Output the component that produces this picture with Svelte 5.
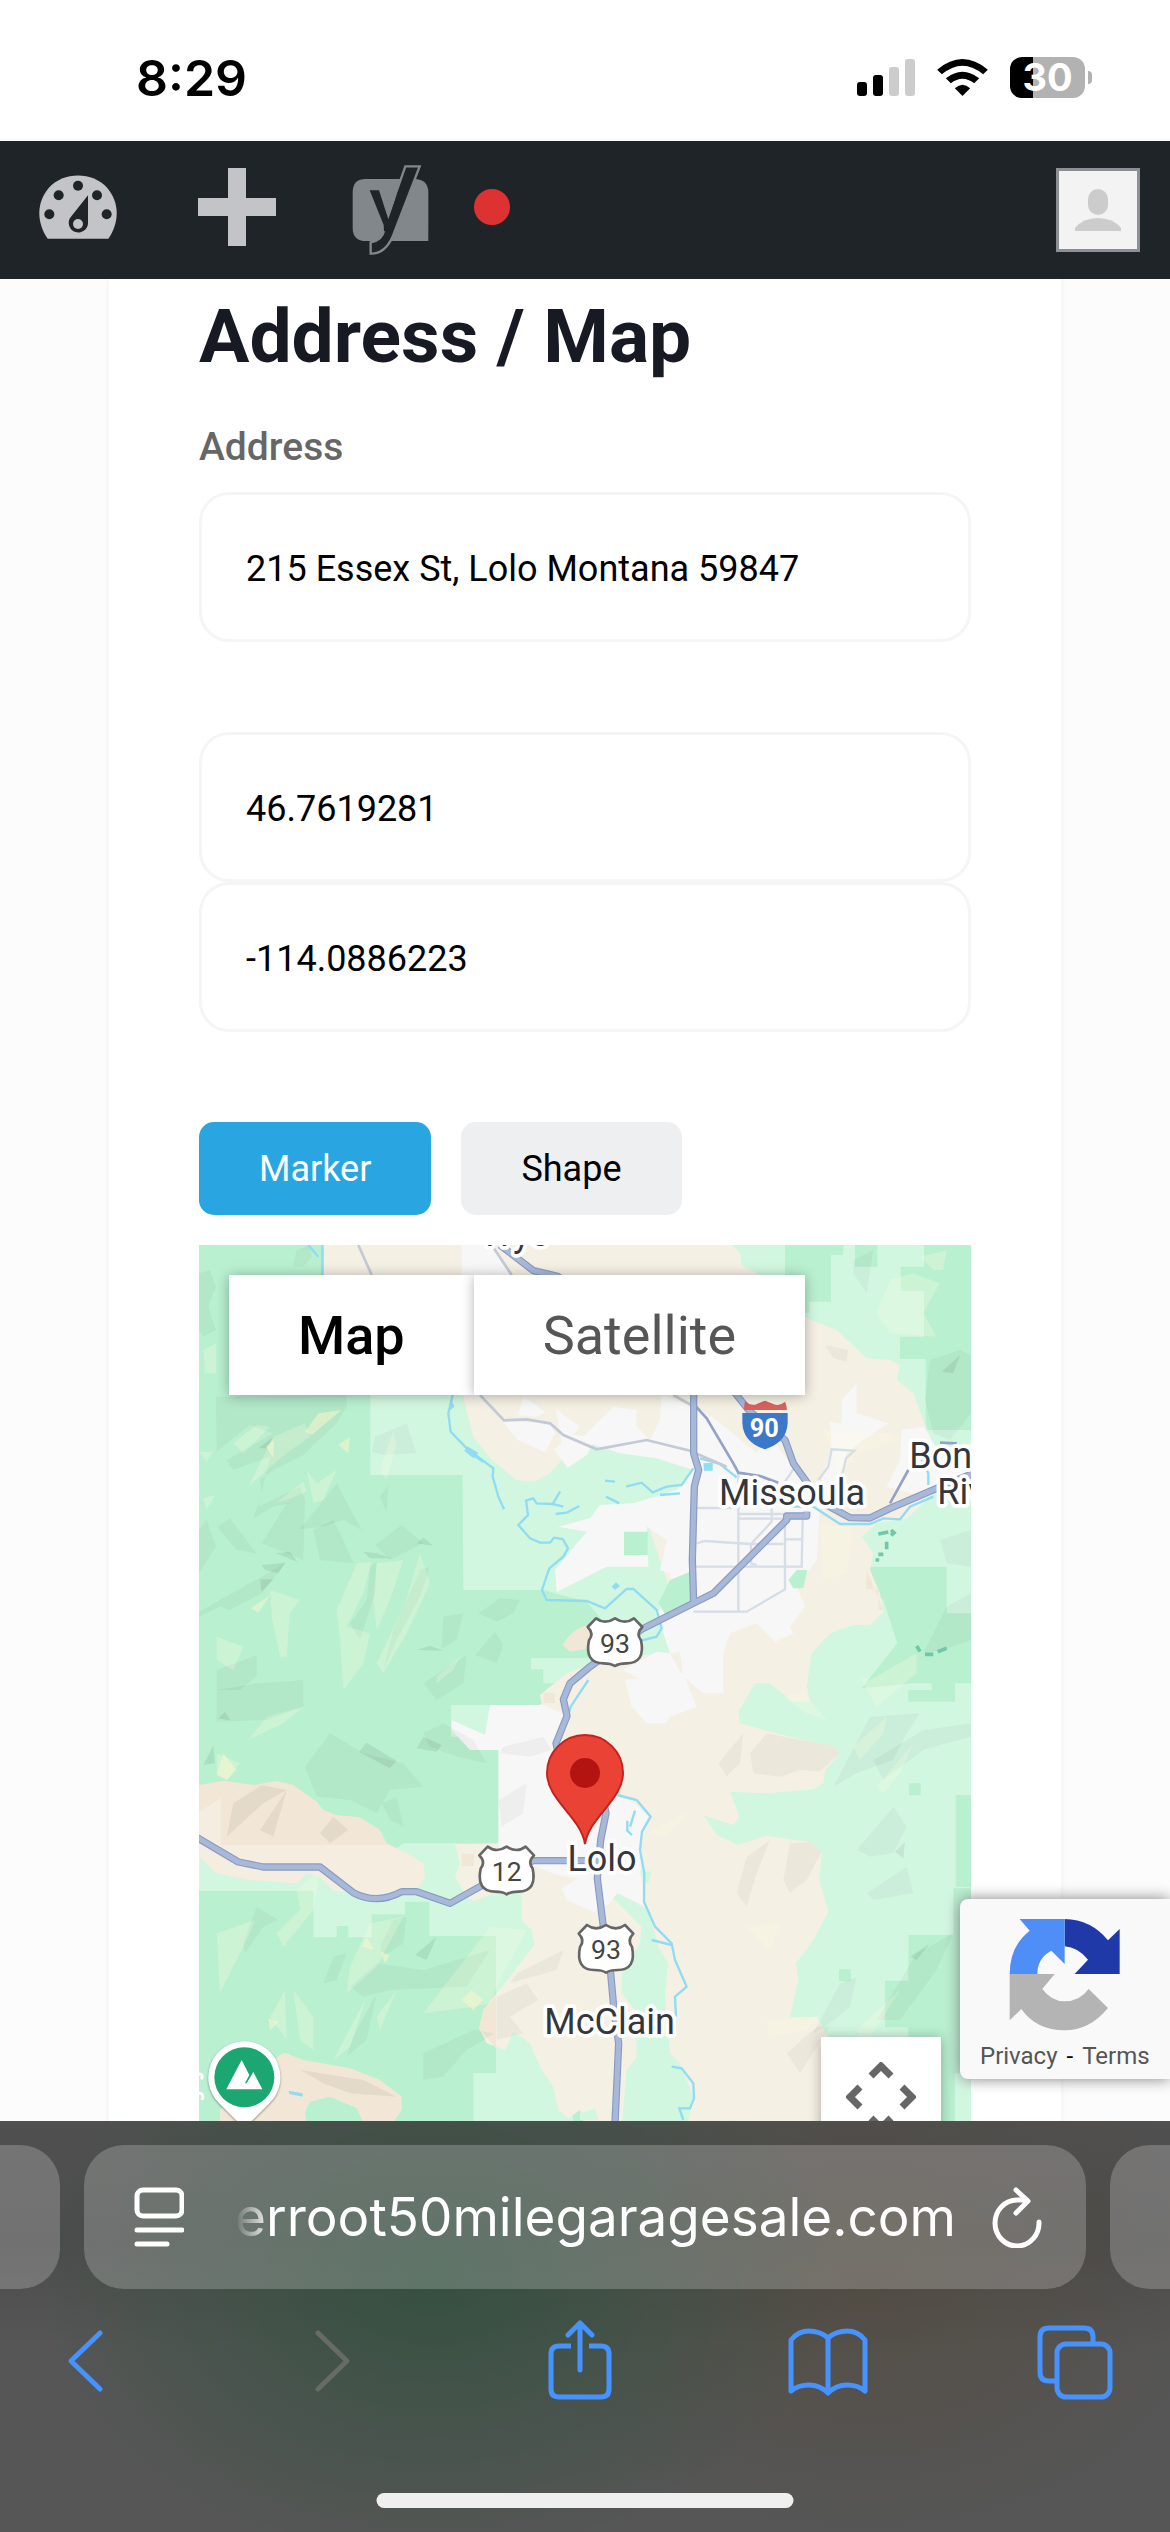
<script>
    let address = '215 Essex St, Lolo Montana 59847';
    let lat = '46.7619281';
    let lng = '-114.0886223';
    let mode = 'marker';

    const shades = [
        '27,100 60,90 78,140 55,200 78,270 40,290 27,270',
        '320,30 360,15 365,50 340,80 308,80',
        '78,470 470,465 470,500 440,550 340,645 250,690 210,720 215,760 190,835 250,800 345,780 330,740 205,800 240,650 130,690 110,660 250,580 180,555 80,635',
        '80,860 120,835 200,940 140,930',
        '440,730 515,870 460,840 400,860 330,868',
        '215,910 290,790 345,780 340,960 290,940',
        '370,870 430,840 460,900 490,970 390,960',
        '27,870 50,840 78,920 27,1000',
        '570,770 595,735 590,820',
        '555,915 635,855 700,910 600,960',
        '215,1010 290,965 215,1060 120,1110 90,1100 27,1130 27,1115',
        '540,980 560,965 555,1060 510,1200 480,1150 530,1080',
        '610,1170 690,990 720,980 690,1070 620,1200 580,1290',
        '760,1130 820,1120 800,1200 755,1225',
        '865,1120 930,1075 990,1080 970,1120 920,1145',
        '855,1245 915,1175 940,1215 920,1270',
        '80,1290 200,1245 200,1310 150,1350 80,1350',
        '700,1330 830,1245 820,1330 740,1380',
        '545,635 555,590 650,550 680,640 580,645',
        '80,1350 200,1330 340,1320 340,1400 230,1440 80,1445',
        '700,1480 760,1450 850,1500 890,1570 800,1550 720,1520',
        '345,1580 420,1480 520,1540 640,1570 700,1640 600,1650 560,1720 480,1680 380,1670',
        '575,1690 620,1670 640,1760 600,1740',
        '480,2240 560,2170 700,2190 900,2130 830,2240 600,2250 520,2270',
        '160,2110 200,2000 265,2040 220,2060 165,2140',
        '570,2120 610,2040 650,2030 640,2110 580,2150',
        '490,2390 560,2260 530,2400 470,2450',
        '700,2440 850,2370 915,2380 830,2430 760,2510 700,2520',
        '400,2230 430,2150 470,2140 440,2220',
        '940,1520 1060,1490 1085,1530 1020,1550 930,1540',
        '925,1680 1010,1630 1000,1720 935,1760',
        '980,2200 1120,2130 1100,2190 960,2230',
        '920,2270 1010,2230 1045,2280 960,2330 1000,2380 920,2400',
        '2220,360 2310,330 2343,345 2343,520 2280,600 2230,580 2205,480',
        '1990,60 2050,30 2030,160 1990,100',
        '1905,315 1975,330 1970,365 1930,355',
        '1585,1570 1660,1480 1650,1570 1610,1610',
        '1680,1540 1730,1480 1860,1505 1925,1515 1950,1540 1890,1595 1830,1590 1770,1610 1690,1600',
        '1640,1960 1670,1850 1740,1800 1700,1900 1670,2000',
        '1780,1920 1800,1810 1860,1807 1895,1835 1850,1920 1800,1960',
        '1930,1640 2040,1430 2190,1420 2150,1480 2110,1560 2000,1600',
        '2050,1560 2200,1470 2343,1450 2343,1490 2200,1530 2080,1620',
        '2000,1830 2110,1700 2150,1760 2110,1840 2040,1850',
        '2030,1960 2150,1880 2170,1960 2050,1980',
        '1870,2380 1950,2230 2000,2210 1980,2300 1920,2350',
        '2060,2340 2180,2140 2290,2080 2240,2190 2130,2340',
        '1790,2440 1880,2360 1920,2360 1830,2500',
        '2250,900 2343,870 2343,980 2270,970',
        '2200,1240 2270,1100 2343,1060 2343,1200 2260,1230'
    ];

    const lights = [
        '40,330 78,310 78,400 45,400',
        '175,740 250,590 345,550 360,590 290,640 230,690',
        '350,690 380,730 440,690 400,780 370,790',
        '255,790 340,725 350,755 290,780',
        '40,775 75,765 50,810',
        '27,635 70,635 50,665',
        '440,1110 500,970 545,965 520,1060 470,1160 540,1180 520,1270 460,1350 450,1200',
        '560,970 640,960 600,1080 560,1170 550,1080',
        '645,1090 690,940 720,1030 650,1180 580,1300 560,1270',
        '240,1050 330,1080 300,1120 290,1250 270,1250 245,1130',
        '80,1190 160,1220 130,1290 80,1260',
        '130,610 200,555 240,560 160,640',
        '570,690 610,570 620,610 590,720',
        '740,1310 810,1250 790,1290 740,1330',
        '175,1500 230,1430 340,1400 280,1450',
        '80,1540 150,1570 110,1620 80,1600',
        '80,2080 195,2040 170,2100 90,2260',
        '320,1950 390,1890 370,2010 280,2120 260,2080 330,2010',
        '480,2180 540,2050 640,2030 560,2180 470,2260',
        '700,2320 900,2060 1010,2070 940,2200 900,2290 850,2300',
        '310,2250 370,2330 370,2430 330,2400',
        '240,2330 285,2250 290,2400',
        '430,2460 530,2270 480,2420',
        '560,2330 620,2250 570,2370',
        '2060,220 2100,120 2170,100 2250,130 2200,220 2240,290 2100,280 2080,250',
        '2190,50 2270,30 2260,90 2230,90',
        '1900,570 1940,670 1920,760 2000,640 2130,600 2100,580',
        '1890,850 1990,860 1970,1000 1900,1020',
        '2010,1310 2040,1320 2180,1240 2180,1300 2060,1400',
        '1990,1520 2090,1430 2080,1480 2010,1560',
        '2060,1640 2170,1510 2130,1600 2080,1660',
        '1780,1370 1840,1360 1910,1440 1850,1420',
        '1370,1780 1500,1710 1430,1790',
        '1670,2060 1770,2050 1740,2130 1700,2090',
        '2000,2370 2130,2250 2080,2330 2020,2420',
        '1730,2340 1890,2330 1850,2370 1740,2390'
    ];

    const darks = [
        '250,590 205,625 230,625',
        '520,935 540,955 605,955 560,940',
        '680,910 700,893 730,918',
        '215,975 285,968 265,1000 225,990',
        '210,1018 250,1018 215,1055',
        '258,940 300,935 322,965',
        '680,1230 720,1217 760,1232',
        '507,1535 530,1508 620,1563 600,1585',
        '680,1525 700,1490 755,1515 740,1535',
        '40,1575 70,1515 75,1570',
        '85,1435 105,1415 122,1442',
        '675,2145 740,2090 710,2160',
        '2255,395 2310,345 2290,400',
        '2160,2150 2220,2110 2180,2160',
        '2115,1835 2145,1805 2140,1855'
    ];

    const rivers = [
        'M355,15 L385,50 M397,15 V110',
        'M788,465 L775,520 L782,575 L830,625 L910,685 L908,710 L925,770 L942,808',
        'M830,622 L860,640 L850,650 L825,630 L880,665',
        'M1110,755 L1088,792 L1040,790 L1030,775 L1008,782 L1014,825 L985,855 L1020,895 L1050,908 L1080,908 L1092,893 L1118,897 L1134,925 L1120,950 L1078,985 L1056,1050 L1070,1080 L1190,1083 L1245,1105 L1310,1047 L1330,1047 L1400,1110 L1415,1165 L1400,1190 L1340,1205',
        'M1088,792 L1120,800 M1097,822 L1130,818 L1168,798',
        'M1245,722 L1275,725 M1308,740 L1355,728 L1388,757 L1430,740 L1475,735 L1510,685 M1410,765 L1470,760 M1248,770 L1288,790',
        'M1530,655 L1590,672 L1640,712 M1800,800 L1870,800 L1950,852 L2040,852 L2080,835 L2130,838 L2160,800 L2230,770 M2195,660 L2215,700 V735',
        'M1195,1320 L1142,1400 L1128,1450',
        'M1282,1665 L1340,1680 L1382,1730 L1356,1775 L1350,1830 L1363,1900 L1362,1985 L1395,2060 L1445,2110 L1455,2160 L1490,2240 L1455,2270 L1458,2330',
        'M1385,2100 L1445,2115 M1335,1712 L1320,1760 M1312,1742 L1312,1772 L1326,1785',
        'M1445,2480 L1475,2485 L1510,2530 L1512,2575 L1500,2605 L1468,2605 L1480,2640'
    ];

    const streets = [
        'M505,15 L545,105',
        'M905,15 L965,105',
        'M870,465 L942,541 L1010,538 L1080,550 L1120,585 L1220,628 L1370,600 L1500,632 L1610,680',
        'M1450,465 L1530,510'
    ];

    const grid = [
        'M1515,804 H1650 M1645,822 H1780 M1645,836 H1780 M1520,910 L1545,903 L1680,912 H1780',
        'M1510,980 H1835 L1838,840 M1785,898 H1838 M1645,700 V1115 M1785,840 V1048 L1670,1115 H1510',
        'M1745,800 V845 L1683,912 V970 L1700,975',
        'M1785,725 L1812,685 M1885,720 L1915,680 L1925,628 L1993,632 L1968,655 L1958,700'
    ];

    const highways = [
        'M930,15 L1030,92 L1100,108 L1250,200',
        'M1511,440 V640 L1526,690 L1513,740 L1507,960 L1511,1090',
        'M1620,440 L1680,515 L1785,600 L1810,670 L1860,740 L1910,795 L1980,833 L2040,834 L2100,805 L2240,745 L2350,700',
        'M1850,815 V828 H1790 V840 L1570,1060 L1510,1090 L1355,1168 L1200,1280 L1140,1330 L1120,1378 L1131,1428 L1098,1510 L1130,1650',
        'M1240,1680 L1248,1720 L1232,1800 L1222,1915 L1240,2060 L1262,2200 L1272,2310 L1286,2410 L1275,2650',
        'M20,1792 L145,1866 L220,1881 H390 L490,1958 Q560,1995 635,1955 L680,1955 L780,1990 L950,1895 L1030,1862 H1230'
    ];

    const shields = [
        { x: 1275, y: 1205, label: '93' },
        { x: 950, y: 1890, label: '12' },
        { x: 1248, y: 2125, label: '93' }
    ];

    const places = [
        { x: 975, y: 18, name: 'Wye', anchor: 'middle' },
        { x: 1806, y: 794, name: 'Missoula', anchor: 'middle' },
        { x: 2158, y: 683, name: 'Bon', anchor: 'start' },
        { x: 2242, y: 791, name: 'Riv', anchor: 'start' },
        { x: 1236, y: 1893, name: 'Lolo', anchor: 'middle' },
        { x: 1259, y: 2382, name: 'McClain', anchor: 'middle' }
    ];
</script>

<div class="screen">
    <header class="status">
        <span class="time">8:29</span>
        <div class="indicators">
            <svg width="58" height="37" viewBox="0 0 58 37" aria-hidden="true">
                <rect x="0" y="23" width="10" height="14" rx="3" />
                <rect x="16" y="16" width="10" height="21" rx="3" />
                <rect x="32" y="8" width="10" height="29" rx="3" fill="#ccc" />
                <rect x="48" y="0" width="10" height="37" rx="3" fill="#ccc" />
            </svg>
            <svg width="51" height="37" viewBox="289 57 152 111" aria-hidden="true">
                <path d="M289,89 Q365,25 441,89 L427,103 Q365,51 303,103Z" />
                <path d="M315,115 Q365,76 415,115 L400,130 Q365,103 330,130Z" />
                <path d="M342,145 Q365,124 388,145 L365,168Z" />
            </svg>
            <div class="battery"><span>30</span></div>
        </div>
    </header>

    <nav class="admin">
        <a href="#dashboard" aria-label="Dashboard">
            <svg width="78" height="64" viewBox="27 77 234 190">
                <path fill="#c3c4c7" d="M53,267 C20,220 18,160 56,115 C100,65 188,65 232,115 C270,160 268,220 235,267Z" />
                <g fill="#1f2428">
                    <circle cx="144" cy="108" r="15" />
                    <circle cx="86" cy="137" r="15" />
                    <circle cx="201" cy="137" r="15" />
                    <circle cx="58" cy="194" r="15" />
                    <circle cx="230" cy="194" r="15" />
                    <path d="M174,137 V222 A29,29 0 1 1 120,205Z" />
                </g>
                <circle cx="144" cy="223" r="15" fill="#c3c4c7" />
            </svg>
        </a>
        <a href="#new" aria-label="New">
            <svg width="78" height="78" viewBox="0 0 78 78">
                <path fill="#c3c4c7" d="M30,0 H48 V30 H78 V48 H48 V78 H30 V48 H0 V30 H30Z" />
            </svg>
        </a>
        <a href="#seo" class="seo" aria-label="SEO">
            <svg width="78" height="90" viewBox="965 45 234 270">
                <path fill="#82878c" d="M1007,87 H1152 Q1194,87 1194,129 V273 H1007 Q967,273 967,233 V127 Q967,87 1007,87Z" />
                <path fill="#1f2428" stroke="#82878c" stroke-width="7" d="M1125,49 H1168 L1086,262 Q1063,312 1021,311 V277 Q1055,272 1062,240 L1100,120Z" />
                <path fill="#1f2428" d="M1018,121 H1046 L1074,208 L1105,120 L1090,240 L1061,244 L1060,225Z" />
            </svg>
            <span class="dot"></span>
        </a>
        <a href="#profile" class="avatar" aria-label="Profile">
            <svg width="78" height="78" viewBox="0 0 78 78">
                <rect x="29" y="18" width="20" height="26" rx="10" fill="#ccc" />
                <path fill="#ccc" d="M16,60 V57 Q24,47 39,47 Q54,47 62,57 V60Z" />
            </svg>
        </a>
    </nav>

    <main>
        <form class="card">
            <h2>Address / Map</h2>
            <label for="address">Address</label>
            <input id="address" type="text" bind:value={address} />
            <div class="coords">
                <input type="text" aria-label="Latitude" bind:value={lat} />
                <input type="text" aria-label="Longitude" bind:value={lng} />
            </div>
            <div class="modes">
                <button type="button" class:active={mode === 'marker'} on:click={() => (mode = 'marker')}>Marker</button>
                <button type="button" class:active={mode === 'shape'} on:click={() => (mode = 'shape')}>Shape</button>
            </div>

            <div class="map">
                <svg class="tiles" viewBox="27 15 2316 2700" preserveAspectRatio="xMidYMin slice" aria-hidden="true">
                    <rect x="27" y="15" width="2316" height="2700" fill="#b9f0d0" />
                    <g fill="#d2f7e1">
                        <path d="M541,300 V705 H818 L820,1050 H1060 L1190,1085 L1330,1250 L1450,1240 L1600,900 L1500,400Z" />
                        <path d="M1600,15 H2343 V2715 H1500 V1100Z" />
                        <path d="M783,1395 H900 L890,1490 H783Z M1023,1255 H1200 V1330 H1060 V1288 H1023Z" />
                        <path d="M27,1840 H600 L640,1810 H800 L1000,1950 L1040,2110 L1150,2640 V2715 H850 V2500 H918 V2088 H718 V1985 H645 V2023 H545 V2092 H475 V2058 H440 V2092 H370 V1952 H27Z" />
                    </g>
                    <g fill="#b9f0d0">
                        <path d="M1785,15 H1960 V45 H1923 V185 H1858 V218 H1785Z M1995,15 H2062 V80 H1995Z" />
                        <path d="M2202,15 H2343 V570 H2207 V357 H2130 V290 H2202 V152 H2132 V80 H2202Z" />
                        <path d="M2028,980 H2270 V1120 H2343 V1330 H2170 L2015,1345 L2122,1210 L2080,1080 L2028,1050Z" />
                        <path d="M2155,1350 H2225 V1320 H2295 V1385 H2155Z M2157,1630 H2192 V1666 H2157Z M1947,2188 H1982 V2224 H1947Z" />
                        <path d="M2297,1665 H2343 V1940 H2297Z M2155,2085 H2290 V1945 H2343 V2500 H2295 V2715 H2343 H2250 V2390 H2155 V2362 H2085 V2222 H2155Z" />
                    </g>
                    <path fill="#f5f0e4" d="M402,15 V200 L818,465 L850,590 L905,660 L980,720 L1030,725 L1080,700 L1160,610 L1240,560 L1290,640 L1400,650 L1510,690 L1380,870 L1420,990 L1440,1050 L1400,1120 L1450,1235 L1230,1260 L1130,1300 L1050,1365 L1055,1390 L940,1500 L930,1810 L795,1812 L810,1870 L795,1910 L830,1970 L850,1983 L940,1950 L995,1955 L995,2040 L1025,2070 L1033,2115 L960,2210 L880,2310 L868,2365 L890,2410 L945,2430 L970,2375 L1020,2410 L1050,2480 L1090,2540 L1105,2610 L1135,2635 L1170,2610 L1200,2715 H1980 V2420 L1915,2391 L1880,2330 L1800,2332 L1825,2220 L1818,2170 L1870,2100 L1915,2015 L1888,1920 L1895,1835 L1860,1807 L1730,1787 L1645,1815 L1580,1785 L1540,1725 L1630,1755 L1648,1730 L1620,1655 L1730,1660 L1870,1648 L1900,1630 L1905,1590 L1950,1540 L1925,1515 L1860,1505 L1770,1483 L1650,1450 L1645,1415 L1695,1330 H1740 L1810,1385 L1860,1385 L1850,1340 L1865,1240 L1920,1180 L1990,1155 L2040,1155 L2080,1115 L2070,1060 L2040,990 L2050,940 L2015,890 L2060,850 L2150,835 L2210,780 L2250,740 L2220,590 L2200,540 L2170,460 L2120,420 L2130,375 L2100,360 L2030,355 L1940,270 L1850,235 L1780,150 L1700,100 L1655,75 L1650,40 L1625,15Z" />
                    <path fill="#f2e7d6" d="M27,1635 L100,1622 L190,1635 L260,1623 L310,1635 L380,1685 L400,1710 L440,1725 L510,1732 L570,1770 L590,1810 L650,1840 L700,1870 L705,1910 L680,1950 L560,1965 L430,1953 L390,1910 L350,1900 L320,1930 L180,1920 L80,1900 L27,1850Z M270,2445 L285,2438 L340,2460 L480,2485 L570,2520 L635,2570 V2610 L600,2660 H90 V2610Z" />
                    <path fill="#f2e7d6" d="M1118,1215 Q1150,1160 1200,1155 L1260,1190 V1215 L1140,1235Z M1060,1358 H1095 V1390 H1060Z M815,1842 H852 V1878 H815Z M2030,990 L2080,1110 H2065 V1048 H2028Z M880,2310 L918,2270 V2425 L868,2365Z" />
                    <path fill="#f5f0e4" d="M27,1715 L92,1675 V1815 H600 L650,1840 L700,1870 L705,1910 L680,1950 L560,1965 L430,1953 L390,1910 L350,1900 L320,1930 L180,1920 L80,1900 L27,1850Z" opacity="0.7" />
                    <g fill="#f7f7f7">
                        <path d="M815,15 H905 L965,105 H815Z M1000,470 L1065,515 L1040,530 L985,525Z M938,545 L1080,550 L1095,580 L1065,637 L985,600Z M1098,508 L1170,560 L1150,585 L1220,590 L1190,645 L1133,683 L1092,628 L1115,610Z" />
                        <path d="M1415,465 L1530,510 L1580,540 L1700,640 L1740,590 L1850,735 L1890,790 L1880,960 L1820,1040 L1845,1100 L1800,1160 L1810,1180 L1755,1205 L1700,1150 L1620,1180 L1600,1240 V1360 H1540 L1480,1310 L1470,1235 L1440,1240 L1400,1120 L1440,1080 L1440,1000 L1410,990 L1430,900 L1370,860 L1375,980 H1250 L1100,1056 L1095,990 L1190,875 L1105,860 L1200,835 L1230,795 L1330,790 L1460,750 L1510,690 L1400,655 L1290,640 L1170,600 L1270,500 L1340,510 V560 L1380,600 L1410,540Z" />
                        <path d="M1305,1320 L1480,1300 L1520,1400 L1440,1430 L1430,1450 H1370 L1325,1400Z M1300,1290 L1400,1235 L1440,1240 L1490,1330 L1400,1350Z" />
                        <path d="M1895,720 L1925,620 L1920,545 L1955,550 V480 L2000,430 V520 L2095,550 L2020,600 L1970,640 L1950,710 L1900,770Z M2135,570 L2200,560 L2250,640 L2343,610 V700 L2200,770 L2090,740 L2130,660Z M1850,345 V420" />
                        <path d="M900,1395 H1060 L1130,1425 L1110,1510 L1130,1650 L1290,1665 L1340,1695 L1375,1730 L1350,1780 L1350,1850 L1360,1995 L1280,1960 L1260,1990 L1210,2015 L1130,1980 L1115,1945 L1165,1915 L1100,1905 L1040,1880 L925,1860 V1530 H840 L785,1470 V1440 L885,1485Z" />
                    </g>
                    <path fill="#b9f0d0" d="M1302,875 H1373 V945 H1302Z M1405,1090 L1440,1020 L1500,995 V1090 L1430,1130Z M1795,1020 L1820,990 H1852 L1840,1045 H1810Z M345,2615 L360,2585 L420,2570 L500,2605 L525,2660 H350Z" />
                    <path fill="#d2f7e1" d="M1270,1975 L1355,2060 L1350,2110 L1295,2200 V2260 L1335,2310 L1340,2450 L1310,2490 L1290,2715 H1480 L1510,2570 L1470,2470 L1440,2440 L1425,2260 L1435,2170 L1405,2120 L1375,2010 L1285,1960Z M1170,2620 L1215,2605 L1225,2640 H1170Z M1350,1890 L1385,1895 L1375,1930 L1360,1930Z" />

                    <g fill="#000" fill-opacity="0.035">
                        {#each shades as points}<polygon {points} />{/each}
                    </g>
                    <g fill="#fffbe0" fill-opacity="0.26">
                        {#each lights as points}<polygon {points} />{/each}
                    </g>
                    <g fill="#000" fill-opacity="0.07">
                        {#each darks as points}<polygon {points} />{/each}
                        <path d="M130,1690 L215,1635 L290,1650 L220,1690 L110,1790Z M390,1780 L430,1730 L475,1770 L420,1810Z M210,1770 L290,1650 L250,1790Z M330,2490 L520,2520 L620,2570 L480,2560 L400,2530Z" opacity="0.8" />
                    </g>
                    <g fill="#fff7cc" fill-opacity="0.5">
                        <path d="M345,575 L385,520 L455,510 L365,585Z M445,615 L480,590 L475,640Z M228,620 L252,600 L250,655Z M182,1105 L242,1065 L205,1118Z M80,1605 L100,1540 L140,1590 L110,1620Z M515,2120 L530,2090 L552,2130Z M572,2135 L600,2145 L585,2170Z M815,2280 L845,2250 L880,2280 L850,2310Z M235,2335 L268,2345 L240,2370Z" />
                    </g>

                    <g class="river">
                        {#each rivers as d}<path {d} />{/each}
                    </g>
                    <path fill="#8fdcf3" d="M1540,670 L1568,668 V692 H1542Z M1265,1040 L1278,1027 L1290,1038 L1275,1050Z M296,2552 L338,2560 V2570 L298,2562Z M775,515 L785,480 L793,500Z" />
                    <path class="tracks" d="M2065,882 L2095,876 M2103,870 L2112,878 L2103,886 M2090,905 V928 M2065,943 H2080 M2062,955 V965 M2180,1218 L2190,1235 M2205,1243 H2230 M2243,1235 L2270,1225" />

                    <g class="street">
                        {#each streets as d}<path {d} />{/each}
                    </g>
                    <g class="grid">
                        {#each grid as d}<path {d} />{/each}
                    </g>
                    <path class="avenue" d="M1518,500 L1550,535 L1630,670 L1645,698 L1710,708 L1765,728 M2100,790 L2155,690 M2250,608 L2300,610" />
                    <g class="casing">
                        {#each highways as d}<path {d} />{/each}
                    </g>
                    <g class="highway">
                        {#each highways as d}<path {d} />{/each}
                    </g>

                    {#each places as p}
                        <text class="place" x={p.x} y={p.y} text-anchor={p.anchor}>{p.name}</text>
                    {/each}

                    <path fill="#d9605e" d="M1665,483 Q1685,500 1700,492 L1725,482 L1750,492 Q1768,500 1785,485 Q1792,500 1790,510 H1662 Q1662,495 1665,483Z" />
                    <path fill="#3b78c8" d="M1657,519 H1793 V550 Q1790,608 1725,628 Q1660,608 1657,550Z" />
                    <text class="interstate" x="1723" y="591" text-anchor="middle">90</text>

                    {#each shields as s}
                        <g transform="translate({s.x} {s.y})">
                            <path class="shield" d="M-57,-70 Q-30,-50 0,-70 Q30,-50 57,-70 L82,-44 Q62,-24 78,-4 Q92,64 35,65 Q12,65 0,73 Q-12,65 -35,65 Q-92,64 -78,-4 Q-62,-24 -82,-44Z" />
                            <text class="route" y="33" text-anchor="middle">{s.label}</text>
                        </g>
                    {/each}

                    <path fill="#ea4335" stroke="#c5221f" stroke-width="6" d="M1185,1812 C1172,1730 1071,1680 1071,1599 A114,114 0 0 1 1299,1599 C1299,1680 1198,1730 1185,1812Z" />
                    <circle cx="1185" cy="1599" r="45" fill="#b31412" />

                    <g class="poi">
                        <path fill="#fff" d="M163,2404 A108,108 0 0 1 240,2588 L163,2665 L86,2588 A108,108 0 0 1 163,2404Z" />
                        <circle cx="163" cy="2512" r="90" fill="#1ba672" />
                        <path fill="#fff" d="M109,2548 L155,2460 L178,2505 L165,2530 H170 L190,2496 L217,2548Z" />
                    </g>
                    <path fill="none" stroke="#fff" stroke-width="9" d="M27,2502 Q42,2502 34,2518 M27,2560 Q44,2560 36,2580" />
                </svg>

                <div class="maptype">
                    <button type="button" class="selected">Map</button>
                    <button type="button">Satellite</button>
                </div>
                <button type="button" class="pan" aria-label="Map camera controls">
                    <svg width="70" height="70" viewBox="0 0 70 70" fill="none" stroke="#666" stroke-width="7">
                        <path d="M25,14 L35,4 L45,14 M25,56 L35,66 L45,56 M14,25 L4,35 L14,45 M56,25 L66,35 L56,45" />
                    </svg>
                </button>
            </div>
        </form>
    </main>

    <aside class="recaptcha">
        <svg width="112" height="114" viewBox="208 115 336 342" aria-hidden="true">
            <path fill="#2039a8" d="M375,118 Q455,120 505,182 L540,148 V283 H405 L445,240 Q415,203 375,200Z" />
            <path fill="#4f8ef7" d="M240,118 H375 V253 L335,213 Q293,235 293,283 H210 Q210,200 270,153Z" />
            <path fill="#b4b4b4" d="M210,283 H345 L308,328 Q335,365 375,365 Q420,365 447,328 L505,385 Q450,452 375,452 Q290,452 245,388 L210,422Z" />
        </svg>
        <p><a href="#privacy">Privacy</a><span>-</span><a href="#terms">Terms</a></p>
    </aside>

    <footer>
        <div class="tabs">
            <button class="tab" type="button" aria-label="Previous tab"></button>
            <div class="tab current">
                <button type="button" aria-label="Page menu">
                    <svg width="50" height="60" viewBox="0 0 50 60" fill="none" stroke="#fff" stroke-width="5" stroke-linecap="round">
                        <rect x="3" y="3" width="45" height="26" rx="6" />
                        <path d="M3,43 H48 M3,57 H33" />
                    </svg>
                </button>
                <button type="button" class="url">erroot50milegaragesale.com</button>
                <button type="button" aria-label="Reload">
                    <svg width="50" height="61" viewBox="0 0 50 61" fill="none" stroke="#fff" stroke-width="5" stroke-linecap="round" stroke-linejoin="round">
                        <path d="M47,35 A22,23 0 1 1 25,13 H35 M24,3 L36,14 L24,26" />
                    </svg>
                </button>
            </div>
            <button class="tab" type="button" aria-label="Next tab"></button>
        </div>
        <nav class="tools">
            <button type="button" aria-label="Back">
                <svg width="36" height="80" viewBox="0 0 36 80"><path d="M33,13 L4,41 L33,69" /></svg>
            </button>
            <button type="button" class="off" aria-label="Forward" disabled>
                <svg width="36" height="80" viewBox="0 0 36 80"><path d="M3,13 L32,41 L3,69" /></svg>
            </button>
            <button type="button" aria-label="Share">
                <svg width="64" height="80" viewBox="0 0 64 80">
                    <path stroke-linecap="butt" d="M23,26 H11 Q3,26 3,34 V69 Q3,77 11,77 H53 Q61,77 61,69 V34 Q61,26 53,26 H41" />
                    <path d="M32,50 V4 M20,15 L32,3 L44,15" />
                </svg>
            </button>
            <button type="button" aria-label="Bookmarks">
                <svg width="80" height="80" viewBox="0 0 80 80">
                    <path d="M40,18 Q32,11 21,11 Q10,11 3,20 V71 Q10,65 21,65 Q32,65 40,73 Q48,65 59,65 Q70,65 77,71 V20 Q70,11 59,11 Q48,11 40,18 V72" />
                </svg>
            </button>
            <button type="button" aria-label="Tabs">
                <svg width="76" height="80" viewBox="0 0 76 80">
                    <path stroke-linecap="butt" d="M20,61 H12 Q3,61 3,52 V17 Q3,8 12,8 H47 Q56,8 56,17 V24" />
                    <rect x="20" y="24" width="53" height="53" rx="9" />
                </svg>
            </button>
        </nav>
        <div class="home"></div>
    </footer>
</div>

<style>
    :global(body) {
        margin: 0;
        background: #fcfcfc;
    }

    .screen {
        display: flex;
        flex-direction: column;
        height: 100vh;
        position: relative;
        overflow: hidden;
        font-family: Roboto, sans-serif;
    }

    button {
        font: inherit;
        border: none;
        background: none;
        padding: 0;
        cursor: pointer;
    }

    svg {
        display: block;
    }

    .status {
        display: flex;
        justify-content: space-between;
        align-items: center;
        height: 141px;
        padding: 14px 78px 0 136px;
        box-sizing: border-box;
        background: #fff;
        flex-shrink: 0;
    }

    .time {
        font: 600 50px/60px Inter, sans-serif;
    }

    .indicators {
        display: flex;
        align-items: center;
        gap: 22px;
    }

    .battery {
        position: relative;
        width: 75px;
        height: 41px;
        border-radius: 12px;
        background: linear-gradient(90deg, #000 23px, #b2b2b2 23px);
        color: #fff;
        font: 700 38px/41px Inter, sans-serif;
        text-align: center;
        margin-right: 7px;
    }

    .battery::after {
        content: '';
        position: absolute;
        left: 78px;
        top: 14px;
        width: 4px;
        height: 13px;
        border-radius: 0 6px 6px 0;
        background: #b2b2b2;
    }

    .admin {
        display: grid;
        grid-template-columns: 156px 162px 1fr auto;
        align-items: center;
        height: 138px;
        padding-right: 30px;
        background: #1f2428;
        flex-shrink: 0;
    }

    .admin a {
        display: flex;
        justify-content: center;
        padding-bottom: 6px;
    }

    .admin .seo {
        justify-content: flex-start;
        align-items: center;
        padding: 0 0 0 34px;
        gap: 44px;
    }

    .dot {
        width: 36px;
        height: 36px;
        margin-bottom: 6px;
        border-radius: 50%;
        background: #dc3232;
    }

    .admin .avatar {
        padding: 0;
        border: 3px solid #8c8f94;
        background: #f3f3f3;
    }

    main {
        flex: 1;
        min-height: 0;
        overflow: hidden;
        padding: 0 109px;
    }

    .card {
        background: #fff;
        padding: 12px 90px 90px;
        box-shadow: 0 0 6px rgba(0, 0, 0, 0.06);
    }

    h2 {
        margin: 0 0 36px;
        font-size: 75px;
        line-height: 90px;
        font-weight: 700;
        color: #171923;
    }

    label {
        display: block;
        margin-bottom: 15px;
        font-size: 39px;
        line-height: 60px;
        font-weight: 500;
        color: #666;
    }

    input {
        display: block;
        width: 100%;
        height: 150px;
        box-sizing: border-box;
        border: 3px solid #f5f5f6;
        border-radius: 30px;
        padding: 4px 45px 0 44px;
        background: #fff;
        font: 36px Roboto, sans-serif;
        color: #000;
    }

    .coords {
        margin: 90px 0;
    }

    .modes {
        display: flex;
        gap: 30px;
        margin-bottom: 30px;
    }

    .modes button {
        height: 93px;
        padding: 0 60px;
        border-radius: 15px;
        background: #eeeff1;
        font-size: 36px;
        color: #000;
    }

    .modes button.active {
        background: #29a5e1;
        color: #fff;
    }

    .map {
        position: relative;
        height: 900px;
        overflow: hidden;
    }

    .tiles {
        width: 100%;
        height: 100%;
    }

    .river {
        fill: none;
        stroke: #8fdcf3;
        stroke-width: 7;
    }

    .tracks {
        fill: none;
        stroke: #70c8ab;
        stroke-width: 11;
    }

    .street {
        fill: none;
        stroke: #c3c9d6;
        stroke-width: 8;
    }

    .grid {
        fill: none;
        stroke: #d6dde7;
        stroke-width: 7;
    }

    .avenue {
        fill: none;
        stroke: #93a3c6;
        stroke-width: 8;
    }

    .casing {
        fill: none;
        stroke: #8a9bc2;
        stroke-width: 22;
        stroke-linejoin: round;
    }

    .highway {
        fill: none;
        stroke: #a8b8d8;
        stroke-width: 15;
        stroke-linejoin: round;
    }

    .place {
        font-size: 108px;
        fill: #33373b;
        stroke: #fff;
        stroke-width: 22;
        stroke-linejoin: round;
        paint-order: stroke;
    }

    .interstate {
        font-size: 76px;
        font-weight: 700;
        fill: #fff;
    }

    .shield {
        fill: #fff;
        stroke: #666;
        stroke-width: 8;
        stroke-linejoin: round;
    }

    .route {
        font-size: 80px;
        fill: #444;
    }

    .poi {
        filter: drop-shadow(0 3px 3px rgba(0, 0, 0, 0.4));
    }

    .maptype {
        position: absolute;
        left: 30px;
        top: 30px;
        display: flex;
    }

    .maptype button {
        height: 120px;
        padding: 0 69px;
        background: #fff;
        font-size: 54px;
        color: #565656;
        box-shadow: 0 1px 12px rgba(0, 0, 0, 0.3);
    }

    .maptype .selected {
        font-weight: 500;
        color: #000;
    }

    .pan {
        position: absolute;
        right: 30px;
        top: 792px;
        width: 120px;
        height: 120px;
        display: grid;
        place-items: center;
        background: #fff;
        box-shadow: 0 1px 12px rgba(0, 0, 0, 0.3);
    }

    .recaptcha {
        position: absolute;
        right: 0;
        bottom: 453px;
        width: 210px;
        height: 180px;
        box-sizing: border-box;
        padding: 19px 0 0 20px;
        border-radius: 8px 0 0 8px;
        background: #f9f9f9;
        box-shadow: 0 0 15px gray;
    }

    .recaptcha svg {
        margin-left: 29px;
    }

    .recaptcha p {
        display: flex;
        gap: 9px;
        margin: 10px 0 0;
        font-size: 24px;
        line-height: 28px;
    }

    .recaptcha a {
        color: #555;
        text-decoration: none;
    }

    footer {
        position: relative;
        height: 411px;
        box-sizing: border-box;
        padding-top: 24px;
        flex-shrink: 0;
        background:
            radial-gradient(ellipse 400px 290px at 37% 38%, rgba(50, 80, 62, 0.9), transparent),
            radial-gradient(ellipse 360px 260px at 74% 38%, rgba(82, 72, 58, 0.6), transparent),
            linear-gradient(#505050, #4c4c4c 30%, #565656 55%);
    }

    .tabs {
        display: flex;
        gap: 24px;
    }

    .tab {
        width: 60px;
        height: 144px;
        background: rgba(255, 255, 255, 0.21);
        border-radius: 0 40px 40px 0;
    }

    .tab:last-child {
        border-radius: 40px 0 0 40px;
    }

    .current {
        flex: 1;
        min-width: 0;
        display: flex;
        align-items: center;
        gap: 36px;
        box-sizing: border-box;
        padding: 0 44px 0 50px;
        border-radius: 40px;
    }

    .url {
        flex: 1;
        min-width: 0;
        display: flex;
        justify-content: flex-end;
        overflow: hidden;
        color: #fff;
        font: 53px/72px Inter, sans-serif;
        mask-image: linear-gradient(90deg, transparent 15px, #000 52px);
    }

    .tools {
        display: flex;
        justify-content: space-between;
        padding: 31px 55px 0 45px;
    }

    .tools button {
        display: flex;
        justify-content: center;
        width: 80px;
    }

    .tools svg {
        fill: none;
        stroke: #4693ff;
        stroke-width: 5;
        stroke-linecap: round;
        stroke-linejoin: round;
    }

    .tools .off svg {
        stroke: #666b66;
    }

    .home {
        position: absolute;
        left: 50%;
        bottom: 24px;
        width: 417px;
        height: 15px;
        border-radius: 8px;
        background: #efefef;
        transform: translateX(-50%);
    }
</style>
